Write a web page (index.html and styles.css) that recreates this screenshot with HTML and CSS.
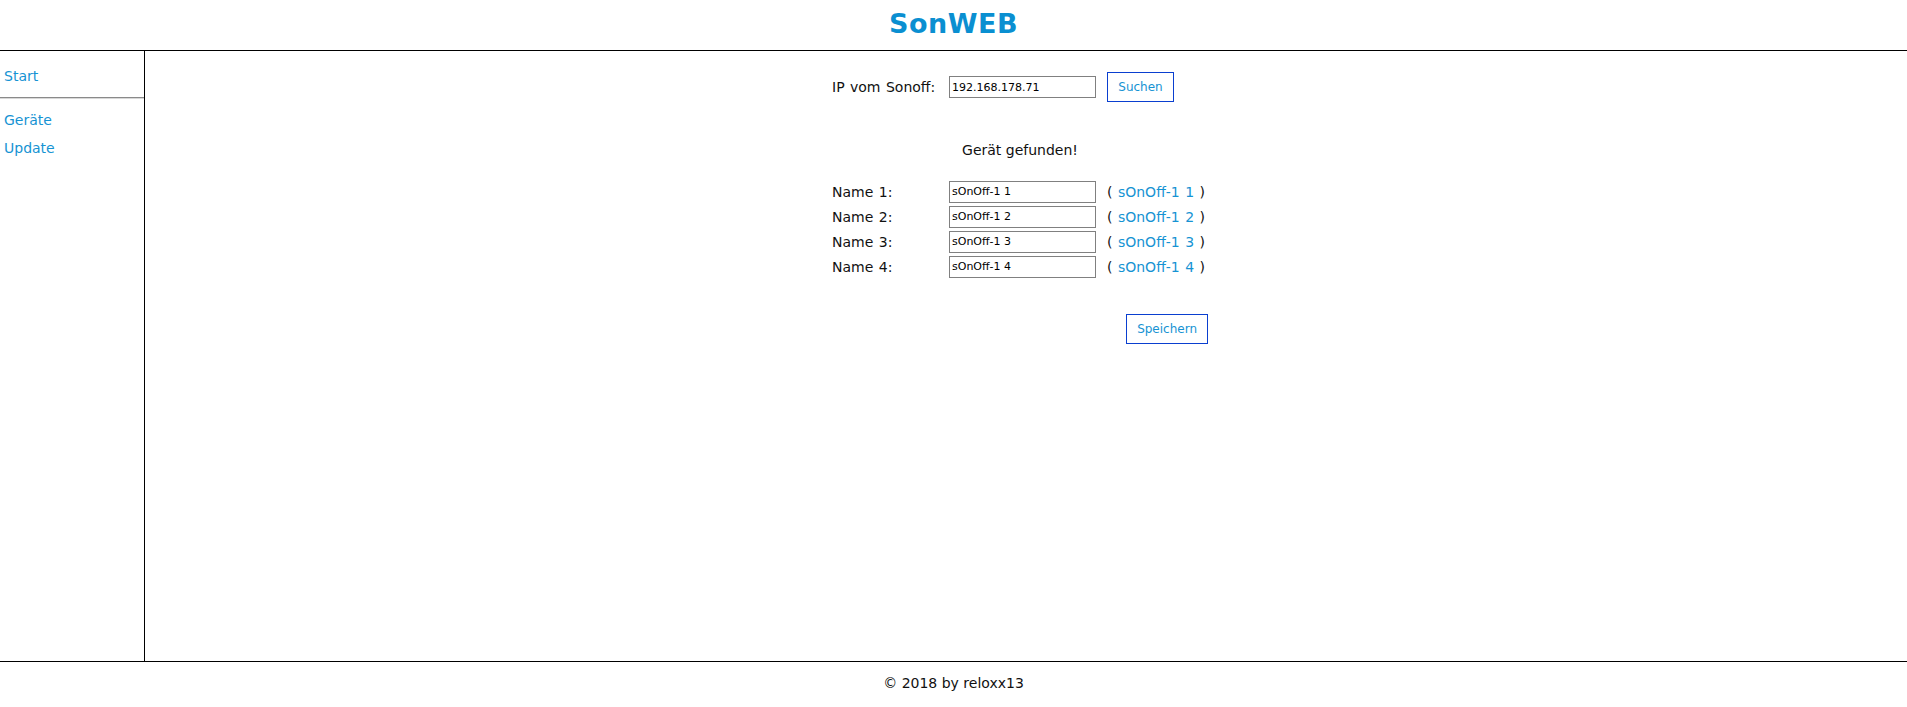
FILE: index.html
```html
<!DOCTYPE html>
<html lang="de">
<head>
<meta charset="utf-8">
<title>SonWEB</title>
<link rel="stylesheet" href="styles.css">
</head>
<body>
<div class="page">
  <header class="header">
    <h1 class="title">SonWEB</h1>
  </header>
  <div class="main">
    <nav class="sidebar">
      <a class="nav-link nav-start" href="#">Start</a>
      <div class="nav-sep"></div>
      <a class="nav-link" href="#">Geräte</a>
      <a class="nav-link" href="#">Update</a>
    </nav>
    <section class="content">
      <div class="form">
        <div class="row ip-row">
          <span class="label">IP vom Sonoff:</span>
          <input class="field" type="text" value="192.168.178.71">
          <button class="btn btn-search">Suchen</button>
        </div>
        <p class="found">Gerät gefunden!</p>
        <div class="names">
          <div class="row name-row">
            <span class="label">Name 1:</span>
            <input class="field" type="text" value="sOnOff-1 1">
            <span class="orig">( <a href="#">sOnOff-1 1</a> )</span>
          </div>
          <div class="row name-row">
            <span class="label">Name 2:</span>
            <input class="field" type="text" value="sOnOff-1 2">
            <span class="orig">( <a href="#">sOnOff-1 2</a> )</span>
          </div>
          <div class="row name-row">
            <span class="label">Name 3:</span>
            <input class="field" type="text" value="sOnOff-1 3">
            <span class="orig">( <a href="#">sOnOff-1 3</a> )</span>
          </div>
          <div class="row name-row">
            <span class="label">Name 4:</span>
            <input class="field" type="text" value="sOnOff-1 4">
            <span class="orig">( <a href="#">sOnOff-1 4</a> )</span>
          </div>
        </div>
        <div class="save-row">
          <button class="btn">Speichern</button>
        </div>
      </div>
    </section>
  </div>
  <footer class="footer">© 2018 by reloxx13</footer>
</div>
</body>
</html>
```

FILE: styles.css
```css
html, body {
  margin: 0;
  padding: 0;
  background: #fff;
}
body {
  font-family: "DejaVu Sans", Verdana, sans-serif;
  font-size: 14px;
  color: #111;
}
.page {
  display: flex;
  flex-direction: column;
  height: 707px;
}
.header {
  height: 50px;
  border-bottom: 1px solid #000;
  display: flex;
  align-items: center;
  justify-content: center;
  flex: none;
}
.title {
  margin: 0;
  font-size: 27px;
  font-weight: bold;
  color: #0a8fd1;
  line-height: 30px;
  letter-spacing: 0.5px;
  padding-bottom: 3px;
}
.main {
  flex: 1;
  display: flex;
  min-height: 0;
}
.sidebar {
  width: 144px;
  border-right: 1px solid #000;
  flex: none;
  display: flex;
  flex-direction: column;
  padding-top: 15px;
}
.nav-link {
  display: block;
  color: #1693d3;
  text-decoration: none;
  padding-left: 4px;
  line-height: 20px;
  height: 28px;
}
.nav-start {
  height: 31px;
}
.nav-sep {
  border-top: 1px solid #8a8a8a;
  border-bottom: 1px solid #d8d8d8;
  margin-bottom: 11px;
}
.content {
  flex: 1;
  display: flex;
  justify-content: center;
  padding-top: 21px;
  padding-right: 12px;
}
.form {
  width: 376px;
}
.row {
  display: grid;
  grid-template-columns: 106px 147px 1fr;
  column-gap: 11px;
  align-items: center;
  white-space: nowrap;
}
.ip-row {
  height: 30px;
}
.label {
  line-height: 20px;
  word-spacing: 1px;
}
.field {
  box-sizing: border-box;
  width: 147px;
  height: 22px;
  border: 1px solid #808080;
  padding: 0 2px;
  margin: 0;
  font-family: "DejaVu Sans", Verdana, sans-serif;
  font-size: 11px;
  color: #000;
  background: #fff;
}
.btn {
  justify-self: start;
  height: 30px;
  padding: 0 10px;
  margin: 0;
  background: #fff;
  border: 1px solid #0a3fd0;
  color: #1693d3;
  font-family: "DejaVu Sans", Verdana, sans-serif;
  font-size: 12px;
  cursor: pointer;
}
.btn-search {
  min-width: 67px;
}
.found {
  margin: 38px 0 0 0;
  text-align: center;
  line-height: 20px;
}
.names {
  margin-top: 19px;
}
.name-row {
  height: 25px;
}
.orig {
  word-spacing: 1px;
}
.orig a {
  color: #1693d3;
  text-decoration: none;
}
.save-row {
  margin-top: 35px;
  display: flex;
  justify-content: flex-end;
}
.footer {
  flex: none;
  border-top: 1px solid #000;
  text-align: center;
  line-height: 20px;
  padding-top: 11px;
  box-sizing: border-box;
  height: 46px;
}
```
